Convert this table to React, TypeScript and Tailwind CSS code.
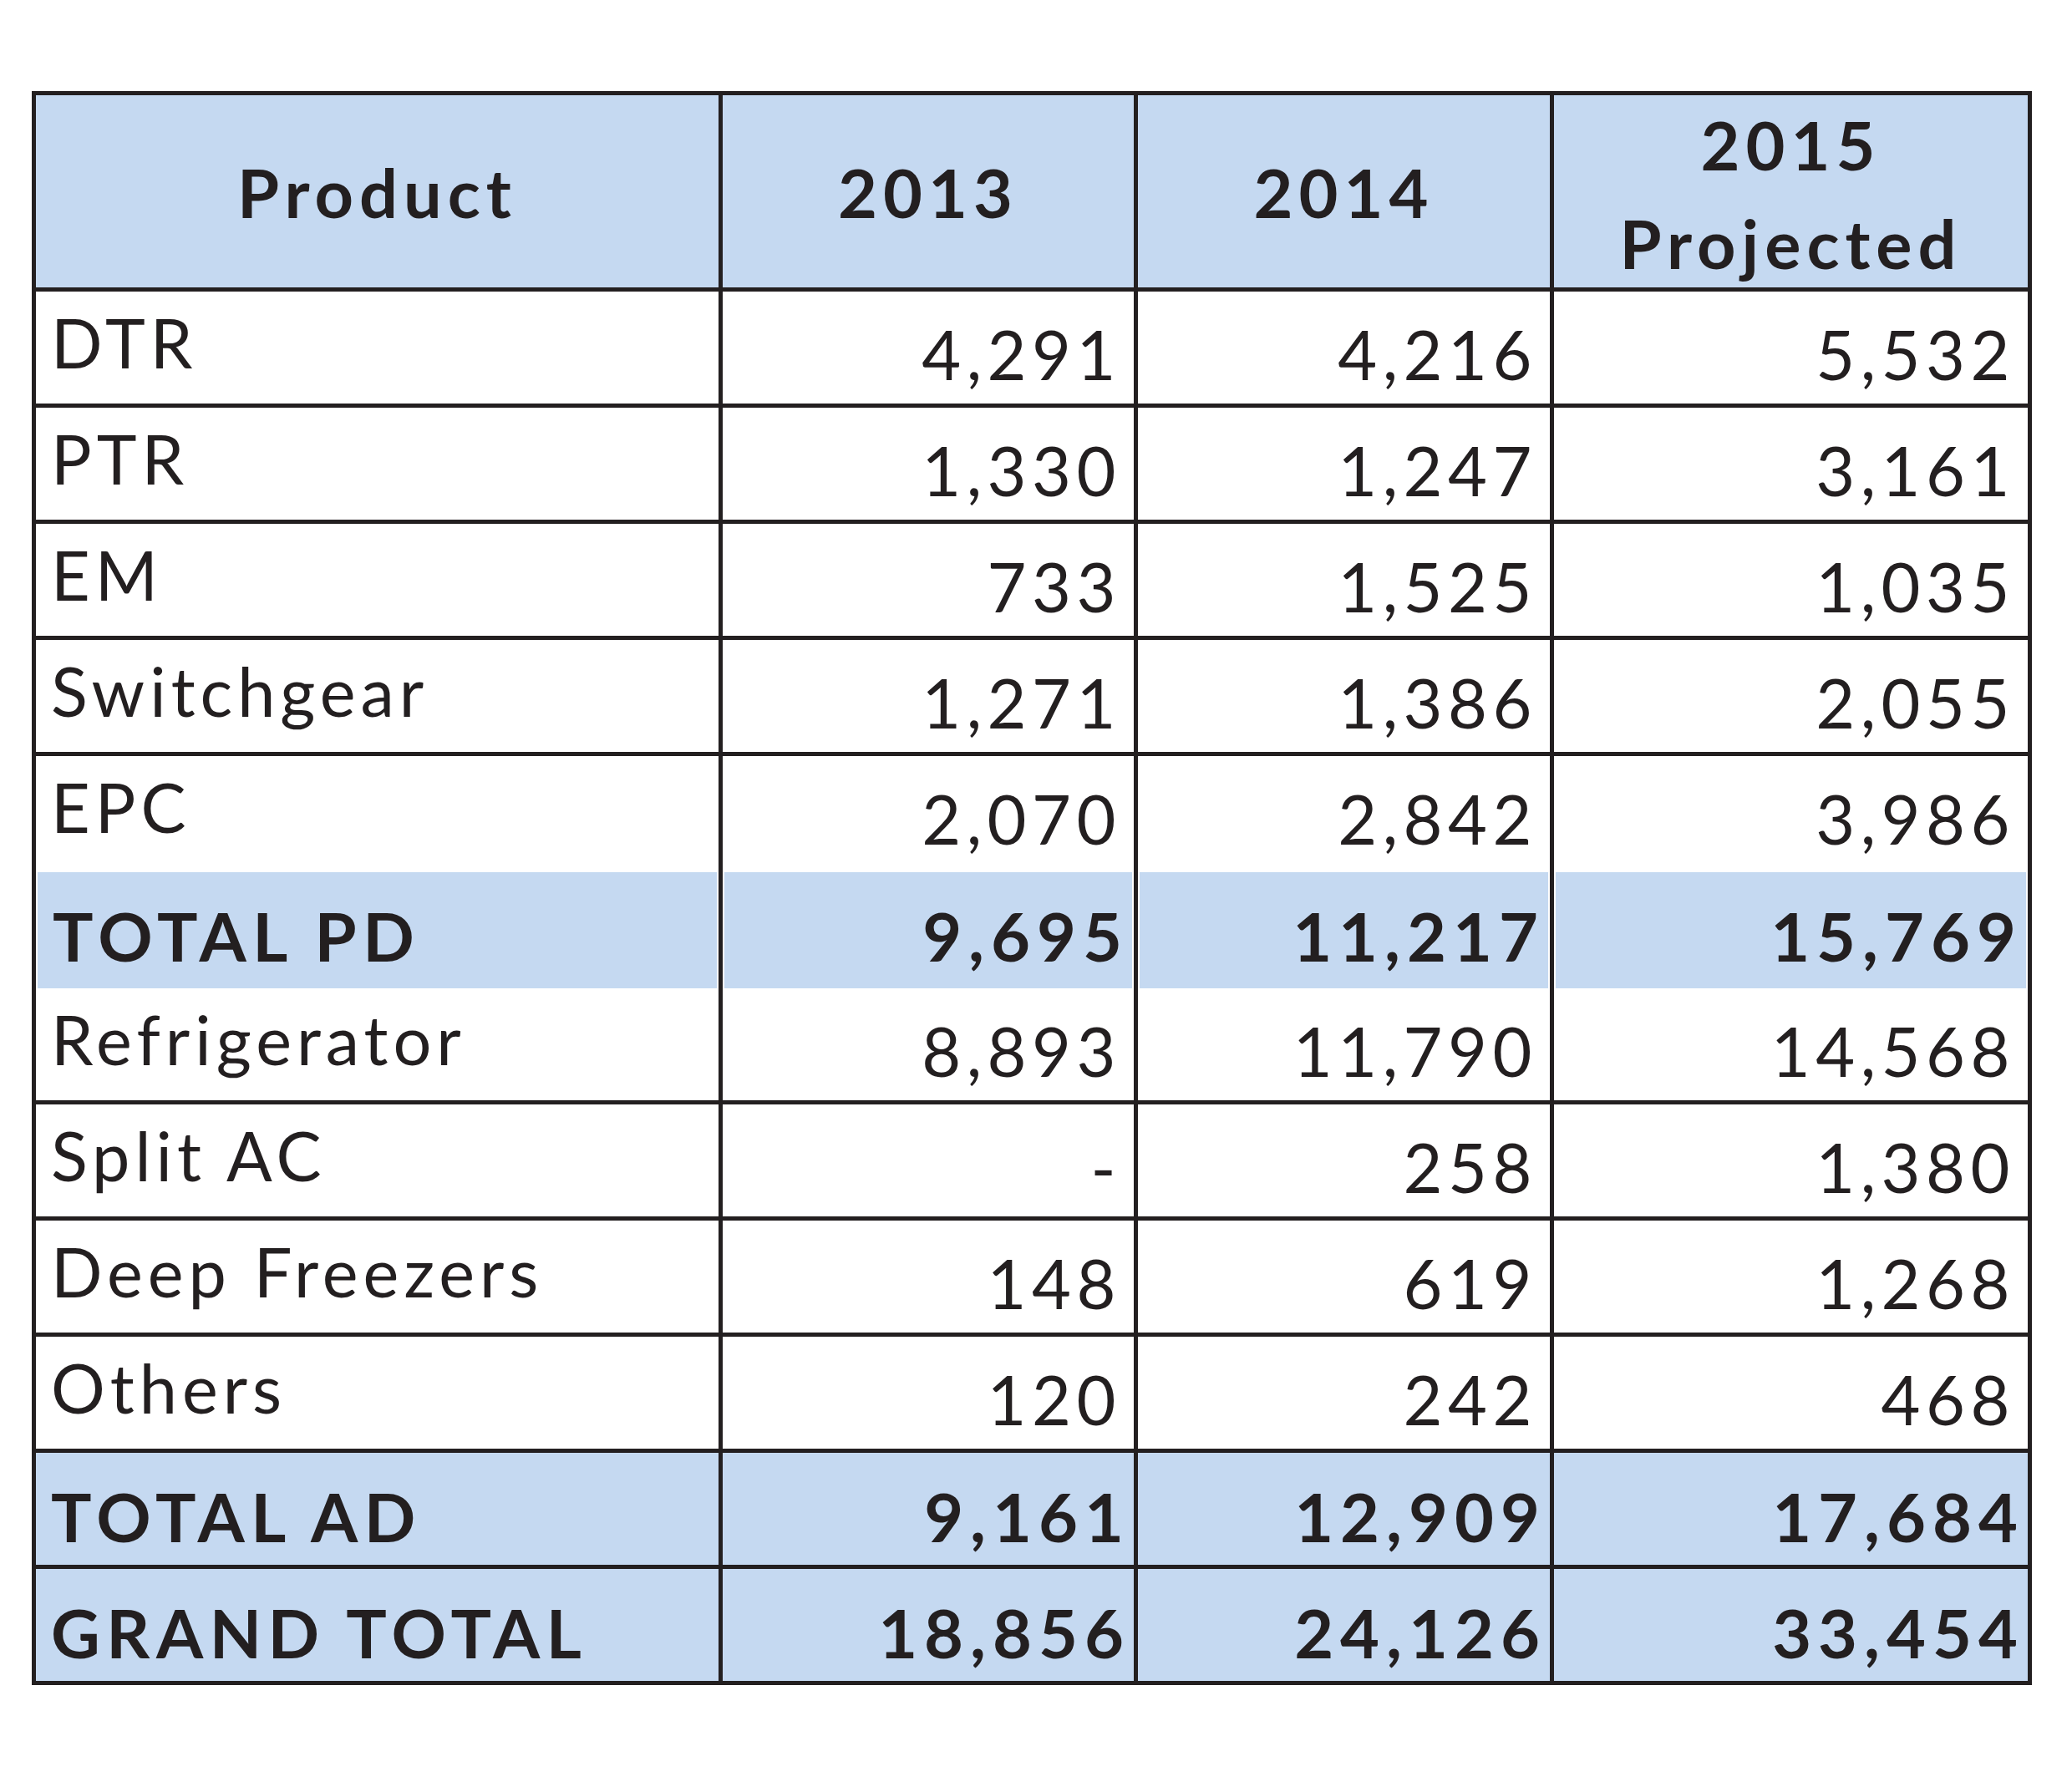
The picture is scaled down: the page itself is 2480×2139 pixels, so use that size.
// Product sales table — header and totals shaded in light blue, heavy grid lines.

type Kind = 'row' | 'pd' | 'total'

type Row = { label: string; vals: [string, string, string]; kind: Kind; noBottom?: boolean }

const ROWS: Row[] = [
  { label: 'DTR', vals: ['4,291', '4,216', '5,532'], kind: 'row' },
  { label: 'PTR', vals: ['1,330', '1,247', '3,161'], kind: 'row' },
  { label: 'EM', vals: ['733', '1,525', '1,035'], kind: 'row' },
  { label: 'Switchgear', vals: ['1,271', '1,386', '2,055'], kind: 'row' },
  { label: 'EPC', vals: ['2,070', '2,842', '3,986'], kind: 'row', noBottom: true },
  { label: 'TOTAL PD', vals: ['9,695', '11,217', '15,769'], kind: 'pd', noBottom: true },
  { label: 'Refrigerator', vals: ['8,893', '11,790', '14,568'], kind: 'row' },
  { label: 'Split AC', vals: ['-', '258', '1,380'], kind: 'row' },
  { label: 'Deep Freezers', vals: ['148', '619', '1,268'], kind: 'row' },
  { label: 'Others', vals: ['120', '242', '468'], kind: 'row' },
  { label: 'TOTAL AD', vals: ['9,161', '12,909', '17,684'], kind: 'total' },
  { label: 'GRAND TOTAL', vals: ['18,856', '24,126', '33,454'], kind: 'total' },
]

function HeadCell({ children, two }: { children: React.ReactNode; two?: boolean }) {
  return (
    <div className="flex items-center justify-center border-r-[5px] border-b-[5px] border-[#231f20] bg-[#c5d9f1] font-bold text-[81px] tracking-[7px]">
      {two ? (
        <div className="mt-[6px] text-center leading-[118px]">{children}</div>
      ) : (
        <div className="leading-none">{children}</div>
      )}
    </div>
  )
}

function BodyCell({ row, text, first }: { row: Row; text: string; first?: boolean }) {
  const bold = row.kind !== 'row'
  const pad = bold ? 'pt-[35px]' : first ? 'pt-[20px]' : 'pt-[34px]'
  const align = first
    ? bold
      ? 'text-left pl-[18px] tracking-[7.5px]'
      : 'text-left pl-[18px] tracking-[6px]'
    : bold
      ? 'text-right pr-[4px] tracking-[8px]'
      : 'text-right pr-[15px] tracking-[6.5px]'
  const border = row.noBottom ? 'border-r-[5px]' : 'border-r-[5px] border-b-[5px]'
  const inner = `${pad} ${align} h-full leading-none text-[81px] ${bold ? 'font-bold' : 'font-normal'}`

  if (row.kind === 'pd') {
    return (
      <div className={`${border} border-[#231f20] bg-white px-[2px]`}>
        <div className={`${inner} bg-[#c5d9f1]`}>{text}</div>
      </div>
    )
  }
  return (
    <div className={`${border} border-[#231f20] ${row.kind === 'total' ? 'bg-[#c5d9f1]' : 'bg-white'}`}>
      <div className={inner}>{text}</div>
    </div>
  )
}

export default function App() {
  return (
    <div className="min-h-[2139px] w-[2480px] bg-white pl-[38px] pt-[109px] font-['Lato',sans-serif] text-[#231f20]">
      <div className="grid w-max grid-cols-[822px_497px_498px_572px] grid-rows-[235px_repeat(12,139px)] border-t-[5px] border-l-[5px] border-[#231f20]">
        <HeadCell>Product</HeadCell>
        <HeadCell>2013</HeadCell>
        <HeadCell>2014</HeadCell>
        <HeadCell two>
          2015
          <br />
          Projected
        </HeadCell>
        {ROWS.map((r) => (
          <div key={r.label} className="contents">
            <BodyCell row={r} text={r.label} first />
            {r.vals.map((v, i) => (
              <BodyCell key={i} row={r} text={v} />
            ))}
          </div>
        ))}
      </div>
    </div>
  )
}
